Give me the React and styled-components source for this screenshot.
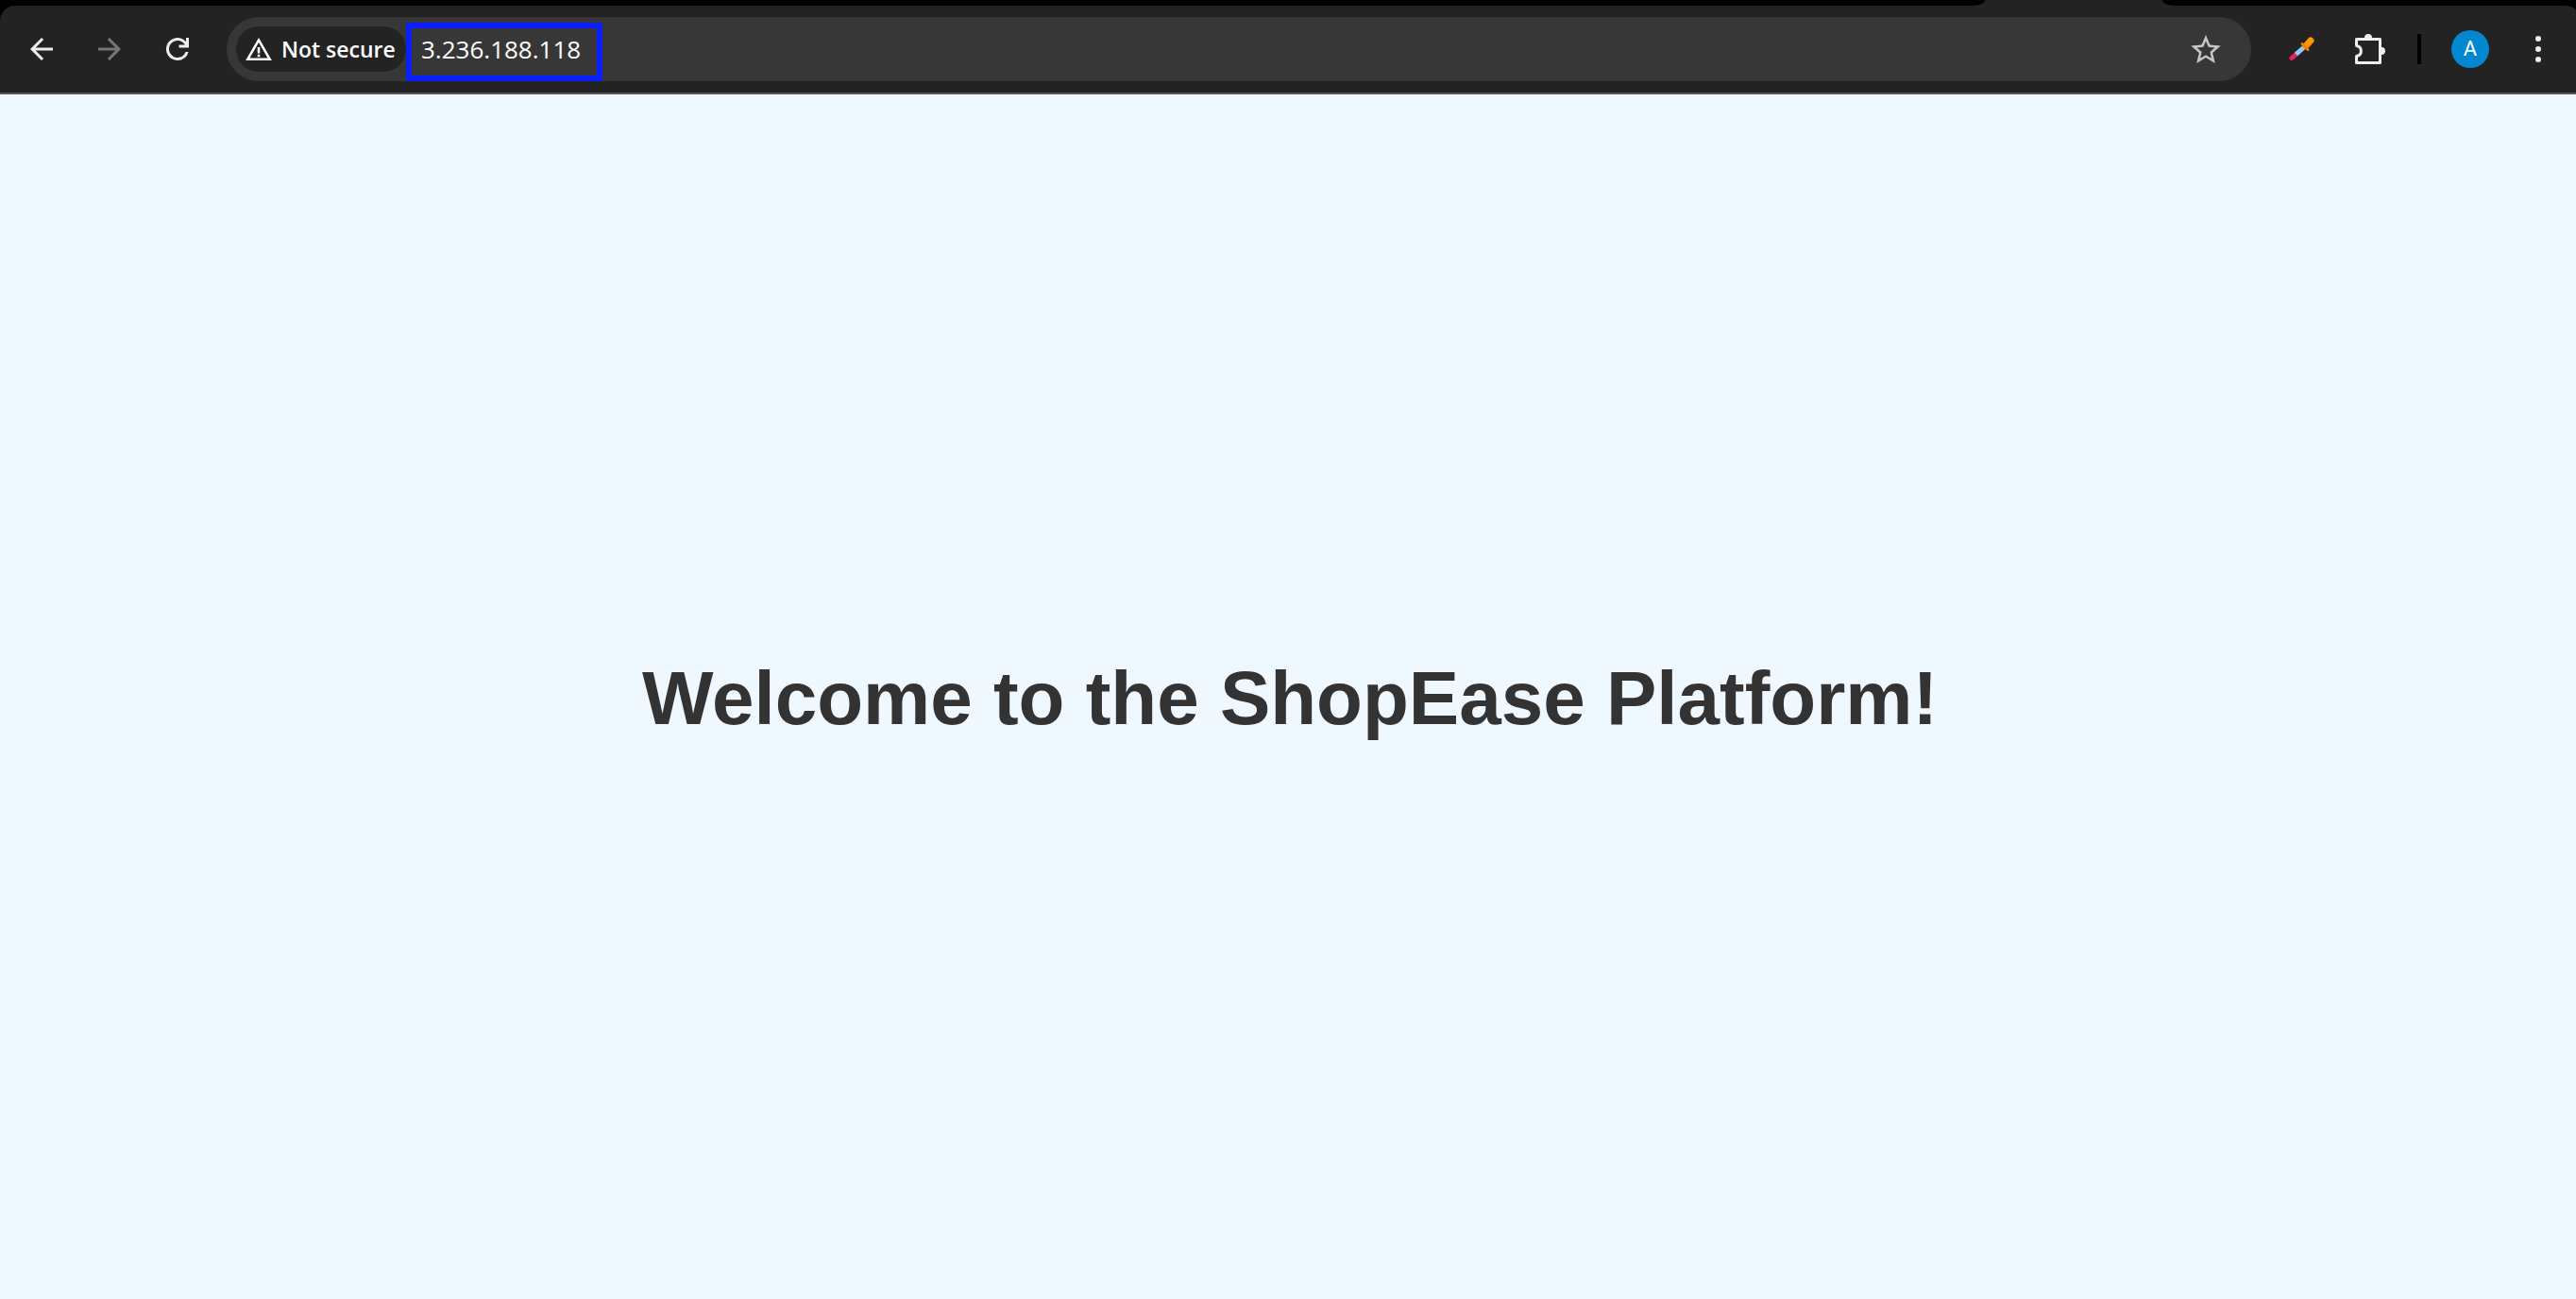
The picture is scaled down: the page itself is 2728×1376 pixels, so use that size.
import React from "react";
import styled, { createGlobalStyle } from "styled-components";

const GlobalStyle = createGlobalStyle`
  *, *::before, *::after { box-sizing: border-box; }
  body { margin: 0; background: #f0f8ff; }
`;

const uiFont = '"Open Sans", "Noto Sans", sans-serif';

const Window = styled.div`
  display: flex;
  flex-direction: column;
  min-height: 100vh;
`;

const Chrome = styled.header`
  background: #000;
  font-family: ${uiFont};
`;

const TabStrip = styled.div`
  display: flex;
  height: 6px;
  background: #232323;
`;

const StripBefore = styled.div`
  flex: 1;
  background: #000;
  border-bottom-right-radius: 12px 6px;
`;

const ActiveTab = styled.div`
  width: 188px;
`;

const StripAfter = styled.div`
  width: 438px;
  background: #000;
  border-bottom-left-radius: 12px 6px;
`;

const Toolbar = styled.div`
  display: flex;
  align-items: center;
  height: 94px;
  padding: 0 20px 0 26px;
  background: #232323;
  border-bottom: 2px solid #5a5352;
  border-top-left-radius: 16px;
  border-top-right-radius: 12px 6px;
`;

const IconButton = styled.button`
  display: flex;
  align-items: center;
  justify-content: center;
  width: ${(p) => p.$width || 36}px;
  height: 48px;
  padding: 0;
  border: 0;
  background: none;
  color: ${(p) => p.$color || "#eeeeee"};
`;

const Navigation = styled.nav`
  display: flex;
  gap: 36px;
  margin-right: 34px;
`;

const Omnibox = styled.div`
  display: flex;
  align-items: center;
  flex: 1;
  height: 68px;
  padding: 0 26px 0 10px;
  border-radius: 34px;
  background: #373737;
`;

const SecurityChip = styled.button`
  display: flex;
  align-items: center;
  gap: 10px;
  width: 180px;
  height: 48px;
  padding: 0 10px;
  border: 0;
  border-radius: 24px;
  background: #232323;
  color: #fff;
  font: 600 23px/32px ${uiFont};
  white-space: nowrap;
`;

const AddressInput = styled.input`
  align-self: flex-end;
  width: 208px;
  height: 62px;
  padding: 0 0 6px 10px;
  border: 6px solid #0a1eff;
  border-radius: 0;
  outline: 0;
  background: #373737;
  color: #fff;
  font: 400 26px/36px ${uiFont};
`;

const Spacer = styled.div`
  flex: 1;
`;

const Actions = styled.div`
  display: flex;
  align-items: center;
  margin-left: 32px;
  gap: 32px;
`;

const Divider = styled.span`
  width: 4px;
  height: 32px;
  background: #000;
`;

const Avatar = styled.span`
  display: flex;
  align-items: center;
  justify-content: center;
  width: 40px;
  height: 40px;
  border-radius: 50%;
  background: #0288d1;
  color: #fff;
  font: 400 22px/24px Roboto, sans-serif;
`;

const Page = styled.main`
  display: flex;
  flex: 1;
  align-items: center;
  justify-content: center;
  padding: 4px 0 0 4px;
  background: #f0f8ff;
`;

const Heading = styled.h1`
  margin: 0;
  color: #333;
  font: 700 80px/92px Arial, "Liberation Sans", sans-serif;
  text-align: center;
`;

const Glyph = ({ d, box = "0 0 24 24", width = 36, height = 36 }) => (
  <svg width={width} height={height} viewBox={box} fill="currentColor" aria-hidden="true">
    <path d={d} />
  </svg>
);

const PuzzleIcon = () => (
  <svg width="32" height="32" viewBox="0 0 32 32" fill="none" stroke="currentColor" strokeWidth="3" strokeLinejoin="round" aria-hidden="true">
    <path d="M1.5 5.5H26.5V30.5H1.5V23.5C8 22.5 8 13.5 1.5 12.5Z" />
    <path d="M10 5V4a4 4 0 0 1 8 0v1zM27 14h1a4 4 0 0 1 0 8h-1z" fill="currentColor" stroke="none" />
  </svg>
);

const EyedropperIcon = () => (
  <svg width="28" height="26" viewBox="0 0 28 26" fill="none" strokeLinecap="round" aria-hidden="true">
    <path d="M3 22.5L8 18" stroke="#e91e63" strokeWidth="5" />
    <path d="M7.5 18.5L16 11" stroke="#90caf9" strokeWidth="5" strokeLinecap="butt" />
    <path d="M18 9.500L23 4" stroke="#ff9800" strokeWidth="7" />
    <path d="M14 7.500L20 13.500" stroke="#f57c00" strokeWidth="3" />
  </svg>
);

export default function App() {
  return (
    <>
      <GlobalStyle />
      <Window>
        <Chrome>
          <TabStrip>
            <StripBefore />
            <ActiveTab />
            <StripAfter />
          </TabStrip>
          <Toolbar>
            <Navigation aria-label="Browser">
              <IconButton aria-label="Back">
                <Glyph d="M20 11H7.830l5.590-5.590L12 4l-8 8 8 8 1.410-1.410L7.830 13H20z" />
              </IconButton>
              <IconButton aria-label="Forward" $color="#777777">
                <Glyph d="M4 11h12.170l-5.590-5.590L12 4l8 8-8 8-1.410-1.410L16.170 13H4z" />
              </IconButton>
              <IconButton aria-label="Reload">
                <Glyph d="M12 20a8 8 0 1 1 6-13.250V4h2v7h-7V9h4.200A6 6 0 1 0 17.650 14h2.100A8 8 0 0 1 12 20z" />
              </IconButton>
            </Navigation>
            <Omnibox>
              <SecurityChip>
                <Glyph
                  width={28}
                  height={24}
                  box="1 2 22 19"
                  d="M1 21 12 2l11 19zm3.450-2h15.100L12 6zM11 10h2v5h-2zm0 6h2v2h-2z"
                />
                Not secure
              </SecurityChip>
              <AddressInput aria-label="Address" defaultValue="3.236.188.118" spellCheck={false} />
              <Spacer />
              <IconButton aria-label="Bookmark this page" $color="#c7c7c7" $width={44}>
                <Glyph
                  width={32}
                  height={30}
                  box="2 2 20 19"
                  d="M22 9.240l-7.190-.620L12 2 9.190 8.630 2 9.240l5.460 4.730L5.820 21 12 17.270 18.180 21l-1.630-7.030L22 9.240zM12 15.400l-3.760 2.270 1-4.280-3.320-2.880 4.380-.380L12 6.100l1.710 4.040 4.380.380-3.320 2.880 1 4.280L12 15.400z"
                />
              </IconButton>
            </Omnibox>
            <Actions>
              <IconButton aria-label="Color picker" $width={44}>
                <EyedropperIcon />
              </IconButton>
              <IconButton aria-label="Extensions">
                <PuzzleIcon />
              </IconButton>
              <Divider />
              <IconButton aria-label="Profile" $width={40}>
                <Avatar>A</Avatar>
              </IconButton>
              <IconButton aria-label="Menu" $width={40}>
                <Glyph width={8} height={30} box="0 0 8 30" d="M4 1a3 3 0 1 1 0 6 3 3 0 0 1 0-6zm0 11a3 3 0 1 1 0 6 3 3 0 0 1 0-6zm0 11a3 3 0 1 1 0 6 3 3 0 0 1 0-6z" />
              </IconButton>
            </Actions>
          </Toolbar>
        </Chrome>
        <Page>
          <Heading>Welcome to the ShopEase Platform!</Heading>
        </Page>
      </Window>
    </>
  );
}
